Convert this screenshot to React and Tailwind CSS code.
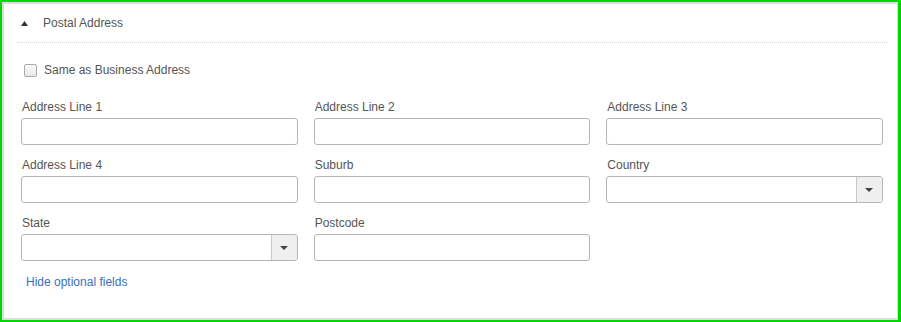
import React from 'react';

const font = { fontFamily: '"Liberation Sans", Arial, sans-serif' };

const Caret = () => (
  <svg width="8" height="4" viewBox="0 0 8 4" className="block">
    <path d="M0 0 L8 0 L4 4 Z" fill="#444" />
  </svg>
);

const TextField = ({ label }) => (
  <div className="flex flex-col">
    <label className="text-[12px] leading-[14px] text-[#555] mb-[4px] ml-[1px]">{label}</label>
    <input
      type="text"
      className="h-[27px] w-full rounded-[3px] border border-[#b5b5b5] bg-white outline-none"
    />
  </div>
);

const SelectField = ({ label }) => (
  <div className="flex flex-col">
    <label className="text-[12px] leading-[14px] text-[#555] mb-[4px] ml-[1px]">{label}</label>
    <div className="h-[27px] w-full flex rounded-[3px] border border-[#b5b5b5] bg-white overflow-hidden">
      <div className="flex-1" />
      <div className="w-[26px] border-l border-[#c8c8c8] bg-[#efefef] flex items-center justify-center">
        <Caret />
      </div>
    </div>
  </div>
);

export default function App() {
  return (
    <div className="w-[901px] h-[322px] border-2 border-r-[3px] border-[#00d600] bg-white" style={font}>
      <div className="h-full border-2 border-r border-[#dcdcdc] bg-white pl-[13px] pr-[10px]">
        {/* Header */}
        <div className="h-[39px] flex items-center border-b border-dotted border-[#d4d4d4]">
          <svg width="7" height="5" viewBox="0 0 7 5" className="ml-[4px] mr-[15px]">
            <path d="M0 5 L3.5 0 L7 5 Z" fill="#333" />
          </svg>
          <span className="text-[12px] text-[#555]">Postal Address</span>
        </div>

        {/* Content */}
        <div className="px-[4px]">
          <label className="flex items-center mt-[18px] ml-[3px] text-[12px] text-[#555]">
            <span className="w-[13px] h-[13px] rounded-[2px] border border-[#a9a9a9] bg-gradient-to-b from-[#fcfcfc] to-[#e6e6e6] mr-[7px]" />
            Same as Business Address
          </label>

          <div className="grid grid-cols-3 gap-x-[16px] gap-y-[13px] mt-[21px]">
            <TextField label="Address Line 1" />
            <TextField label="Address Line 2" />
            <TextField label="Address Line 3" />
            <TextField label="Address Line 4" />
            <TextField label="Suburb" />
            <SelectField label="Country" />
            <SelectField label="State" />
            <TextField label="Postcode" />
          </div>

          <div className="mt-[8px] ml-[5px]">
            <a href="#" className="text-[12px] text-[#3c6fbf]">Hide optional fields</a>
          </div>
        </div>
      </div>
    </div>
  );
}
